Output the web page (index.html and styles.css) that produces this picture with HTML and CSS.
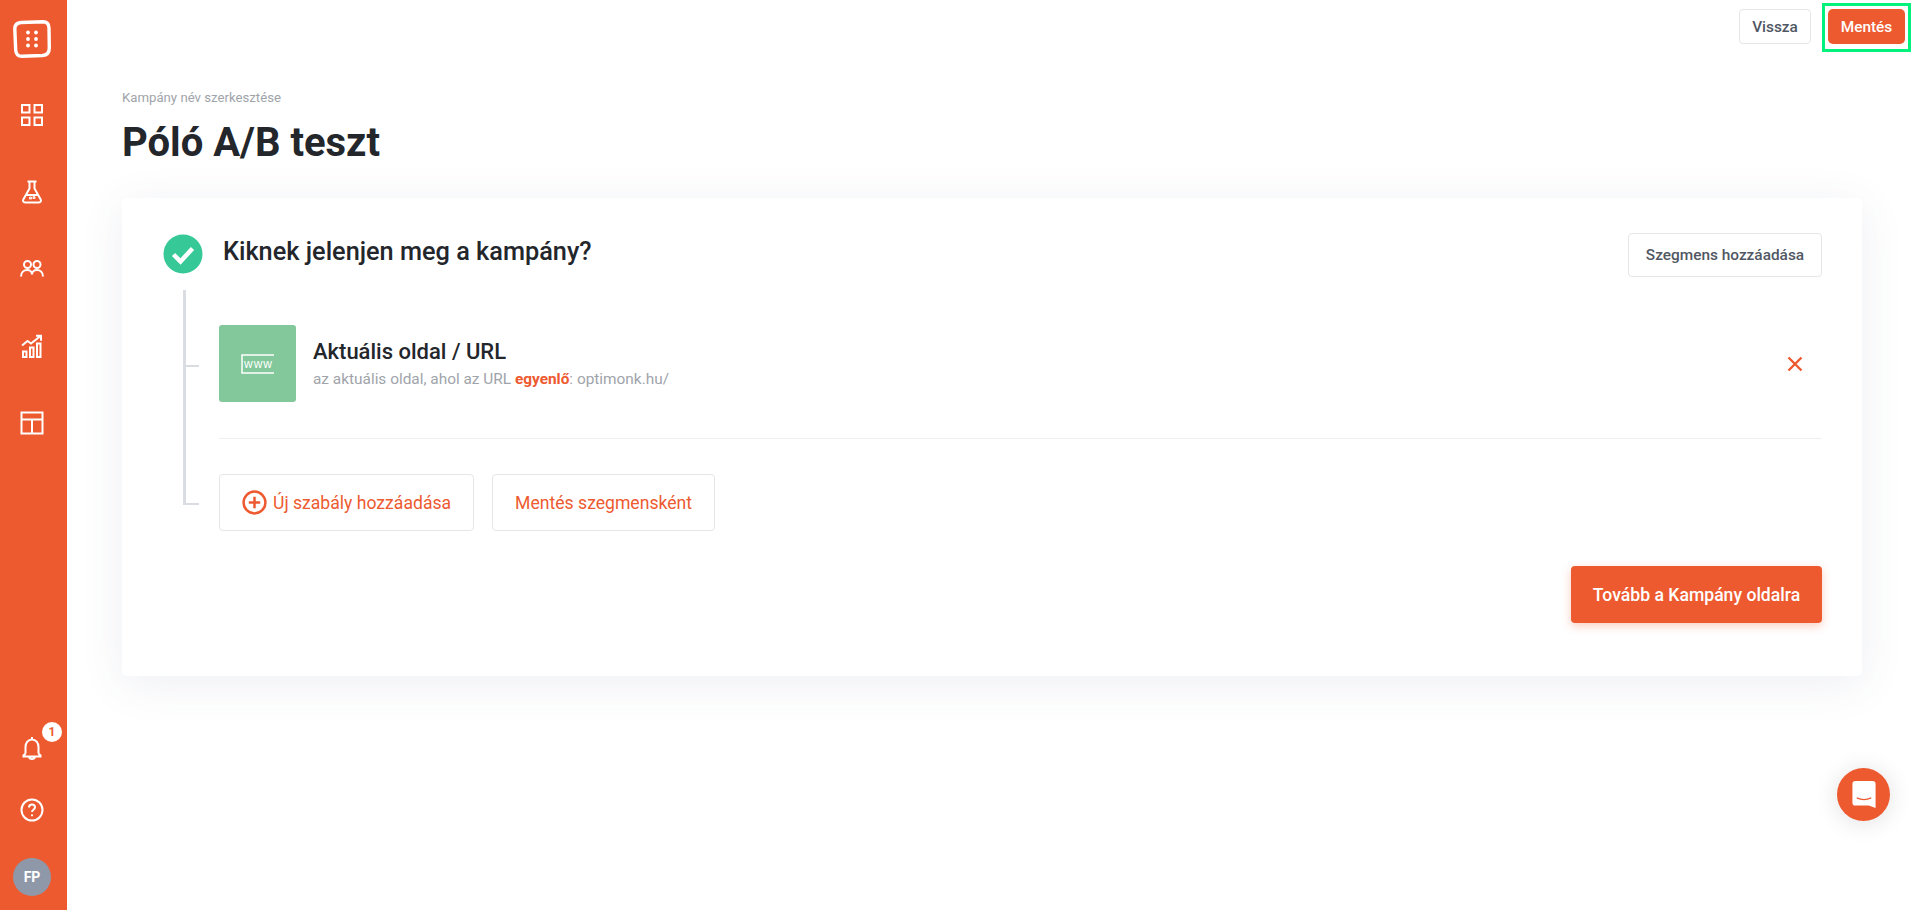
FILE: index.html
```html
<!DOCTYPE html>
<html lang="hu">
<head>
    <meta charset="UTF-8">
    <meta name="viewport" content="width=device-width, initial-scale=1.0">
    <title>Póló A/B teszt</title>
    <link rel="stylesheet" href="styles.css">
</head>
<body>
    <aside class="sidebar">
        <div class="logo">
            <svg viewBox="0 0 38 38" width="38" height="38" fill="#fff">
                <path d="M8 2.5 L30 1.8 Q35.8 1.8 36 8 L36.3 28 Q36.3 35 29.5 35.5 L9 36.3 Q3 36.3 2.7 30 L1.8 9 Q1.8 3 8 2.5 Z" fill="none" stroke="#fff" stroke-width="3.4"/>
                <circle cx="15" cy="12.5" r="1.9"/><circle cx="23" cy="12.5" r="1.9"/>
                <circle cx="15" cy="19" r="1.9"/><circle cx="23" cy="19" r="1.9"/>
                <circle cx="15" cy="25.5" r="1.9"/><circle cx="23" cy="25.5" r="1.9"/>
            </svg>
        </div>
        <nav class="nav">
            <a class="nav-item">
                <svg class="icon" viewBox="0 0 24 24"><rect x="2" y="2" width="7.5" height="7.5"/><rect x="14.5" y="2" width="7.5" height="7.5"/><rect x="2" y="14.5" width="7.5" height="7.5"/><rect x="14.5" y="14.5" width="7.5" height="7.5"/></svg>
            </a>
            <a class="nav-item">
                <svg class="icon" viewBox="0 0 24 24"><path d="M7.5 1.5h9M9.5 1.5v7L3.3 19.5c-.8 1.500.1 3 1.800 3h13.800c1.700 0 2.600-1.500 1.800-3L14.500 8.500v-7M6.500 15h11"/><circle cx="10.500" cy="18" r=".6"/><circle cx="14" cy="17.500" r=".6"/></svg>
            </a>
            <a class="nav-item">
                <svg class="icon" viewBox="0 0 24 24"><circle cx="7.5" cy="7.5" r="3.5"/><circle cx="17" cy="7.5" r="3.5"/><path d="M1 19.5c0-4 2.800-6.500 6.300-6.500 2.500 0 4.700 1.700 4.700 4.500 0-2.800 2.200-4.500 4.800-4.500 3.500 0 6.200 2.500 6.200 6.500"/></svg>
            </a>
            <a class="nav-item">
                <svg class="icon" viewBox="0 0 24 24"><rect x="3" y="17.5" width="3.5" height="5.5"/><rect x="10" y="13.5" width="3.5" height="9.5"/><rect x="17" y="9.5" width="3.5" height="13.5"/><path d="M2 11.5l5.500-4.500 3.500 2.500L20.500 2M16 1.800h5v5"/></svg>
            </a>
            <a class="nav-item">
                <svg class="icon" viewBox="0 0 24 24"><rect x="1.5" y="1.5" width="21" height="21"/><path d="M1.5 8.500h21M12 8.500v14"/></svg>
            </a>
        </nav>
        <div class="side-bottom">
            <a class="nav-item small bell">
                <svg class="icon" viewBox="0 0 24 24"><path d="M12 1v2.500M5.500 17.500v-6.500c0-4.200 2.700-7.500 6.500-7.500s6.500 3.300 6.500 7.500v6.500M5.500 17.500l-2 2v1h17v-1l-2-2M9 20.500c.3 1.600 1.500 2.500 3 2.500s2.700-.9 3-2.500"/></svg>
                <span class="badge">1</span>
            </a>
            <a class="nav-item small">
                <svg class="icon" viewBox="0 0 24 24"><circle cx="12" cy="12" r="10.5"/><path d="M9 9.500c0-1.800 1.300-3 3-3s3 1.200 3 2.800c0 2.500-3 2.400-3 4.700"/><circle class="dot" cx="12" cy="17.3" r="1.1"/></svg>
            </a>
            <div class="avatar">FP</div>
        </div>
    </aside>

    <main class="main">
        <div class="topbar">
            <button class="btn btn-light">Vissza</button>
            <div class="save-frame">
                <button class="btn btn-save">Mentés</button>
            </div>
        </div>

        <div class="content">
            <div class="breadcrumb">Kampány név szerkesztése</div>
            <h1>Póló A/B teszt</h1>

            <section class="card">
                <div class="card-head">
                    <svg class="check" viewBox="0 0 40 40" width="40" height="40">
                        <circle cx="20" cy="20" r="19.5" fill="#36c997"/>
                        <path d="M10.5 20.5l7 7 12-13" fill="none" stroke="#fff" stroke-width="4.5"/>
                    </svg>
                    <h2>Kiknek jelenjen meg a kampány?</h2>
                    <button class="btn btn-light btn-segment">Szegmens hozzáadása</button>
                </div>

                <div class="tree">
                    <div class="rule">
                        <div class="rule-icon">
                            <svg viewBox="0 0 34 20" width="34" height="20" fill="none" stroke="#fff">
                                <path d="M33 1H1v18h32" stroke-width="1.5"/>
                                <text x="3" y="14" class="www">www</text>
                            </svg>
                        </div>
                        <div class="rule-text">
                            <div class="rule-title">Aktuális oldal / URL</div>
                            <div class="rule-desc">az aktuális oldal, ahol az URL <b>egyenlő</b>: optimonk.hu/</div>
                        </div>
                        <svg class="remove" viewBox="0 0 16 16" width="16" height="16"><path d="M1.5 1.5l13 13M14.5 1.5l-13 13"/></svg>
                    </div>
                    <div class="rule-actions">
                        <button class="btn btn-outline">
                            <svg viewBox="0 0 24 24" width="25" height="25" fill="none" stroke="#ed5a30" stroke-width="2.4"><circle cx="12" cy="12" r="10.5"/><path d="M12 6.5v11M6.500 12h11"/></svg>
                            Új szabály hozzáadása
                        </button>
                        <button class="btn btn-outline">Mentés szegmensként</button>
                    </div>
                </div>

                <div class="card-foot">
                    <button class="btn btn-primary">Tovább a Kampány oldalra</button>
                </div>
            </section>
        </div>
    </main>

    <button class="chat">
        <svg viewBox="0 0 24 28" width="24" height="27"><path d="M3 0h18a3 3 0 0 1 3 3v25l-7-2.500H3a3 3 0 0 1-3-3V3a3 3 0 0 1 3-3z" fill="#fff"/><path d="M4.500 17.500c4.500 2.200 10.500 2.200 15 0" fill="none" stroke="#ed5a30" stroke-width="1.3"/></svg>
    </button>
</body>
</html>
```

FILE: styles.css
```css
* {
    box-sizing: border-box;
}
body {
    font-family: Roboto, Arial, sans-serif;
    background-color: #fff;
    color: #23262b;
    display: flex;
    min-height: 100vh;
    margin: 0;
}
button {
    font-family: inherit;
    cursor: pointer;
}

/* sidebar */
.sidebar {
    width: 67px;
    height: 910px;
    flex-shrink: 0;
    padding-right: 3px;
    background-color: #ed5a30;
    display: flex;
    flex-direction: column;
    align-items: center;
}
.logo {
    height: 38px;
    margin-top: 20px;
}
.nav {
    margin-top: 18px;
    width: 100%;
}
.nav-item {
    display: flex;
    align-items: center;
    justify-content: center;
    height: 77px;
    position: relative;
}
.nav-item.small {
    height: 62px;
}
.icon {
    width: 24px;
    height: 24px;
    fill: none;
    stroke: #fff;
    stroke-width: 2;
}
.icon .dot {
    fill: #fff;
    stroke: none;
}
.side-bottom {
    margin-top: auto;
    width: 100%;
    display: flex;
    flex-direction: column;
    align-items: stretch;
    padding-bottom: 14px;
}
.badge {
    position: absolute;
    top: 5px;
    left: 42px;
    width: 20px;
    height: 20px;
    border-radius: 50%;
    background-color: #fff;
    color: #ed5a30;
    font-size: 12px;
    font-weight: 700;
    line-height: 20px;
    text-align: center;
}
.avatar {
    width: 38px;
    height: 38px;
    margin: 17px auto 0;
    border-radius: 50%;
    background-color: #8f98a8;
    color: #fff;
    font-size: 14px;
    font-weight: 700;
    line-height: 38px;
    text-align: center;
}

/* main */
.main {
    flex: 1;
    min-width: 0;
}
.topbar {
    display: flex;
    justify-content: flex-end;
    align-items: flex-start;
    gap: 11px;
    padding: 3px 2px 0 0;
}
.btn {
    border-radius: 4px;
    font-size: 15.4px;
    font-weight: 500;
    background-color: #fff;
    display: inline-flex;
    align-items: center;
    justify-content: center;
}
.btn-light {
    border: 1px solid #e5e6e9;
    color: #505763;
    height: 35px;
    width: 72px;
    padding: 0;
    margin-top: 6px;
}
.save-frame {
    display: flex;
    border: 3px solid #00f27c;
    padding: 3px 3px 5px;
}
.btn-save {
    background-color: #ed5a30;
    color: #fff;
    border: none;
    height: 35px;
    width: 77px;
    padding: 0;
    border-radius: 5px;
}
.content {
    padding: 0 51px 0 55px;
}
.breadcrumb {
    margin-top: 38px;
    font-size: 13.2px;
    line-height: 16px;
    color: #a0a4aa;
}
h1 {
    margin: 12px 0 0;
    font-size: 40px;
    line-height: 50px;
    font-weight: 700;
    color: #23262b;
}
.card {
    margin-top: 30px;
    height: 478px;
    border-radius: 5px;
    background-color: #fff;
    box-shadow: 0 8px 45px rgba(70,80,120,0.09);
    padding: 35px 40px 0 41px;
}
.card-head {
    display: flex;
    align-items: flex-start;
}
.check {
    flex-shrink: 0;
    margin-top: 1px;
}
h2 {
    margin: 0 0 0 20px;
    font-size: 25.3px;
    line-height: 38px;
    font-weight: 500;
    flex: 1;
}
.btn-segment {
    width: 194px;
    height: 44px;
    margin-top: 0;
}

/* rule tree */
.tree {
    position: relative;
    margin: 13px 0 0 20px;
    padding-left: 36px;
}
.tree::before {
    content: "";
    position: absolute;
    left: 0;
    top: 0;
    bottom: 27px;
    width: 3px;
    background-color: #d9dce1;
}
.rule {
    position: relative;
    display: flex;
    align-items: center;
    height: 149px;
    padding-bottom: 1px;
    border-bottom: 1px solid #eeeff1;
}
.rule::before,
.rule-actions::before {
    content: "";
    position: absolute;
    left: -36px;
    width: 16px;
    height: 2px;
    background-color: #d9dce1;
}
.rule::before {
    top: 75px;
}
.rule-icon {
    width: 77px;
    height: 77px;
    margin-right: 17px;
    border-radius: 3px;
    background-color: #82c89a;
    display: flex;
    align-items: center;
    justify-content: center;
}
.www {
    font-family: "Liberation Sans", Arial, sans-serif;
    font-size: 12px;
    letter-spacing: 1px;
    fill: #fff;
    stroke: none;
}
.rule-text {
    flex: 1;
}
.rule-title {
    font-size: 22px;
    line-height: 28px;
    font-weight: 500;
}
.rule-desc {
    margin-top: 3px;
    font-size: 15.4px;
    line-height: 20px;
    color: #a0a4aa;
}
.rule-desc b {
    color: #ed5a30;
    font-weight: 700;
}
.remove {
    margin-right: 19px;
    fill: none;
    stroke: #ed5a30;
    stroke-width: 2.4;
}
.rule-actions {
    position: relative;
    display: flex;
    gap: 18px;
    margin-top: 35px;
}
.rule-actions::before {
    top: 29px;
}
.btn-outline {
    height: 57px;
    padding: 0 22px;
    border: 1px solid #e5e6e9;
    color: #ed5a30;
    font-size: 17.6px;
    font-weight: 400;
    gap: 6px;
}
.card-foot {
    display: flex;
    justify-content: flex-end;
    margin-top: 35px;
}
.btn-primary {
    width: 251px;
    height: 57px;
    border: none;
    background-color: #ed5a30;
    color: #fff;
    font-size: 17.6px;
    box-shadow: 0 3px 10px rgba(237,90,48,0.3);
}

/* chat */
.chat {
    position: fixed;
    left: 1837px;
    top: 768px;
    width: 53px;
    height: 53px;
    padding: 0;
    border: none;
    border-radius: 50%;
    background-color: #ed5a30;
    box-shadow: 0 2px 24px rgba(0,0,0,0.12);
    display: flex;
    align-items: center;
    justify-content: center;
}
```
